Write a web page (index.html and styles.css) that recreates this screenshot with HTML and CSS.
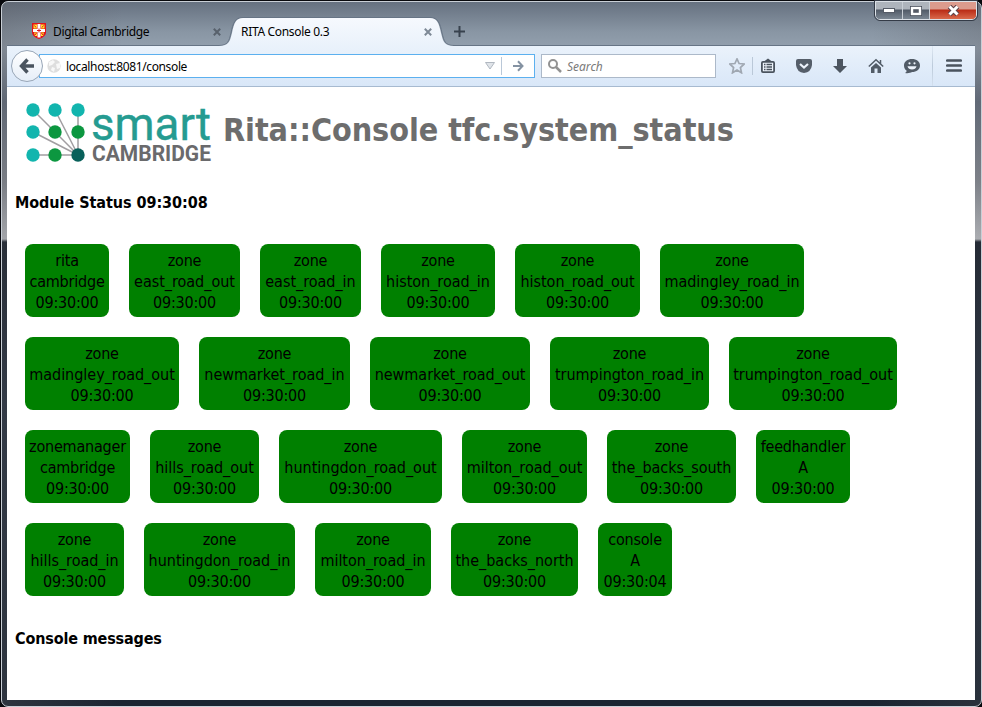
FILE: index.html
```html
<!DOCTYPE html>
<html lang="en"><head><meta charset="utf-8"><title>RITA Console 0.3</title><link rel="stylesheet" href="styles.css"></head>
<body>
<div class="window">
<div class="shell">
<header class="titlebar">
  <svg class="chrome-art" width="968" height="46" viewBox="7 0 968 46" aria-hidden="true">
    <defs><linearGradient id="tab" x1="0" y1="0" x2="0" y2="1"><stop offset="0" stop-color="#f6f9fe"/><stop offset="1" stop-color="#eaf2fb"/></linearGradient></defs>
    <path d="M7 45.500H219C228 45.500 229 41 231 33C233 23 235 17.500 243 17.500H430C438 17.500 440 23 442 33C444 41 445 45.500 454 45.500H975V47H7Z" fill="none" stroke="#667485"/>
    <path d="M219 46C229 46 230 41 232 33C234 23 236 18 243 18H430C437 18 439 23 441 33C443 41 444 46 454 46Z" fill="url(#tab)"/>
  </svg>
  <div class="tab tab-one">
    <svg class="shield" width="14" height="16" viewBox="0 0 14 16"><path d="M0 0H14V10Q13 14 7 16Q1 14 0 10Z" fill="#e2121b"/><path d="M1.500 1.500H5V5.500H1.500ZM9 1.500H12.500V5.500H9ZM2 9.500H5V13H3ZM9 9.500H12L11 13H9Z" fill="#ffe52c"/><path d="M2.500 2.500 4 4.500M11.500 2.500 10 4.500M3 12 4.500 10M11 12 9.500 10" stroke="#e2121b"/><path d="M7 1V14.500M1 7.500H13" stroke="#fff" stroke-width="3"/><path d="M7 5.500V9.500M5 7.500H9" stroke="#e2121b"/></svg>
    <span>Digital Cambridge</span>
    <svg class="x" width="8" height="8" viewBox="0 0 8 8"><path d="M.8.800 7.200 7.200M7.200.8.800 7.200" stroke="#58616c" stroke-width="2"/></svg>
  </div>
  <div class="tab tab-two"><span>RITA Console 0.3</span>
    <svg class="x" width="8" height="8" viewBox="0 0 8 8"><path d="M.8.800 7.200 7.200M7.200.8.800 7.200" stroke="#7e8996" stroke-width="2"/></svg>
  </div>
  <svg class="plus" width="11" height="11" viewBox="0 0 11 11"><path d="M5.500 0V11M0 5.500H11" stroke="#38424e" stroke-width="2"/></svg>
</header>
<nav class="toolbar">
  <div class="back"><svg width="16" height="16" viewBox="0 0 16 16"><path d="M8.500 1.500 2.500 8 8.500 14.500M3 8H15" fill="none" stroke="#4a545f" stroke-width="3.400"/></svg></div>
  <div class="url">
    <svg class="globe" width="14" height="14" viewBox="0 0 14 14"><circle cx="7" cy="7" r="6.700" fill="#dedede"/><path d="M2 3 6 1 8 3 5 6 2 7ZM9 5 13 4 13 9 10 10ZM5 8 8 9 7 13 4 11Z" fill="#f8f8f8"/></svg>
    <span class="address">localhost:8081/console</span>
    <svg class="drop" width="10" height="8" viewBox="0 0 10 8"><path d="M.5.500H9.500L5 7Z" fill="#e0e4e9" stroke="#b0b7c0"/></svg>
    <i class="rule"></i>
    <svg class="go" width="11" height="12" viewBox="0 0 11 12"><path d="M0 6H9M5 1.300 9.500 6 5 10.700" fill="none" stroke="#8492a2" stroke-width="2"/></svg>
  </div>
  <div class="search"><svg width="14" height="14" viewBox="0 0 14 14"><circle cx="5" cy="5" r="4" fill="none" stroke="#929292" stroke-width="2"/><path d="M8 8 13 13" stroke="#929292" stroke-width="2.500"/></svg><span>Search</span></div>
  <div class="tools">
    <svg width="16" height="16" viewBox="0 0 16 16"><path d="M8 .9 10.100 5.500 15.200 6 11.400 9.500 12.500 14.800 8 12 3.500 14.800 4.600 9.500.8 6 5.900 5.500Z" fill="none" stroke="#a0a8b2" stroke-width="1.700"/></svg>
    <i class="rule"></i>
    <svg width="16" height="16" viewBox="0 0 16 16"><path d="M4 3.500 8 .500 12 3.500Z" fill="#4a535e"/><rect x="1.900" y="3.900" width="12.200" height="10.200" rx="1" fill="#eef4fc" stroke="#4a535e" stroke-width="1.800"/><path d="M4 6.500H5.500M6.500 6.500H12M4 9H5.500M6.500 9H12M4 11.500H5.500M6.500 11.500H12" stroke="#4a535e" stroke-width="1.300"/></svg>
    <svg width="16" height="16" viewBox="0 0 16 16"><path d="M0 3Q0 1 2 1H14Q16 1 16 3V7Q15 14.500 8 15Q1 14.500 0 7Z" fill="#555e69"/><path d="M4 6 8 9.500 12 6" fill="none" stroke="#edf3fb" stroke-width="2.200"/></svg>
    <svg width="16" height="16" viewBox="0 0 16 16"><path d="M5 1H11V8H15L8 15 1 8H5Z" fill="#4c5560"/></svg>
    <svg width="16" height="16" viewBox="0 0 16 16"><path d="M.8 8.500 8 1.800 15.200 8.500M12.500 2V6" fill="none" stroke="#525c67" stroke-width="1.500"/><path d="M3 9.500 8 5 13 9.500V15H9.500V10.500H6.500V15H3Z" fill="#525c67"/></svg>
    <svg width="16" height="16" viewBox="0 0 16 16"><path d="M8 1C12.500 1 16 3.500 16 7.500S12.500 14 8 14C6.500 15 4 15.500 1 15Q3 14 2.500 12.500C1 11.500 0 10 0 7.500C0 3.500 3.500 1 8 1Z" fill="#525c67"/><circle cx="5.500" cy="5.300" r="1.100" fill="#edf3fb"/><circle cx="10.500" cy="5.300" r="1.100" fill="#edf3fb"/><path d="M3.500 8.300H12.500Q11.500 11.500 8 11.500T3.500 8.300Z" fill="#edf3fb"/></svg>
    <i class="rule tall"></i>
    <svg width="16" height="16" viewBox="0 0 16 16"><path d="M1.300 2.500H14.700M1.300 7.500H14.700M1.300 12.500H14.700" stroke="#4a535e" stroke-width="2.700" stroke-linecap="round"/></svg>
  </div>
</nav>
<main>
  <div class="brand">
    <svg class="logo" width="195" height="75" viewBox="17 95 195 75" role="img" aria-label="smart cambridge">
      <g stroke="#a19ea1" stroke-width="1.500" fill="none"><path d="M33 110 78 155M55 110 78 155M78 110V155H33M33 132 78 155M55 132 78 155"/></g>
      <g fill="#12b5ae"><circle cx="33" cy="110" r="6.700"/><circle cx="55" cy="110" r="6.700"/><circle cx="78" cy="110" r="6.700"/><circle cx="33" cy="132" r="6.700"/><circle cx="33" cy="155" r="6.700"/></g>
      <g fill="#0c9740"><circle cx="55" cy="132" r="6.700"/><circle cx="78" cy="132" r="6.700"/><circle cx="55" cy="155" r="6.700"/></g><circle cx="78" cy="155" r="6.700" fill="#08605a"/>
      <text class="smart" x="91" y="140" textLength="120" lengthAdjust="spacingAndGlyphs">smart</text>
      <text class="camb" x="92" y="161" textLength="119" lengthAdjust="spacingAndGlyphs">CAMBRIDGE</text>
    </svg>
    <h1>Rita::Console tfc.system_status</h1>
  </div>
  <h2 class="status">Module Status 09:30:08</h2>
  <section class="modules">
    <div class="row row-a"><div class="card">rita<br>cambridge<br>09:30:00</div><div class="card">zone<br><span>east_road_out</span><br>09:30:00</div><div class="card">zone<br><span>east_road_in</span><br>09:30:00</div><div class="card">zone<br><span>histon_road_in</span><br>09:30:00</div><div class="card">zone<br><span>histon_road_out</span><br>09:30:00</div><div class="card">zone<br><span>madingley_road_in</span><br>09:30:00</div></div>
    <div class="row row-b"><div class="card">zone<br><span>madingley_road_out</span><br>09:30:00</div><div class="card">zone<br><span>newmarket_road_in</span><br>09:30:00</div><div class="card">zone<br><span>newmarket_road_out</span><br>09:30:00</div><div class="card">zone<br><span>trumpington_road_in</span><br>09:30:00</div><div class="card">zone<br><span>trumpington_road_out</span><br>09:30:00</div></div>
    <div class="row row-c"><div class="card">zonemanager<br>cambridge<br>09:30:00</div><div class="card">zone<br><span>hills_road_out</span><br>09:30:00</div><div class="card">zone<br><span>huntingdon_road_out</span><br>09:30:00</div><div class="card">zone<br><span>milton_road_out</span><br>09:30:00</div><div class="card">zone<br><span>the_backs_south</span><br>09:30:00</div><div class="card">feedhandler<br>A<br>09:30:00</div></div>
    <div class="row row-d"><div class="card">zone<br><span>hills_road_in</span><br>09:30:00</div><div class="card">zone<br><span>huntingdon_road_in</span><br>09:30:00</div><div class="card">zone<br><span>milton_road_in</span><br>09:30:00</div><div class="card">zone<br><span>the_backs_north</span><br>09:30:00</div><div class="card">console<br>A<br>09:30:04</div></div>
  </section>
  <h2 class="messages">Console messages</h2>
</main>
</div>
<div class="controls"><b><svg width="12" height="5"><rect x=".5" y=".5" width="11" height="4" fill="#fff" stroke="#555b66"/></svg></b><b><svg width="12" height="10"><rect x="2" y="2" width="8" height="6" fill="none" stroke="#454b57" stroke-width="4"/><rect x="2" y="2" width="8" height="6" fill="#555b66" stroke="#fff" stroke-width="2.400"/></svg></b><b class="close"><svg width="13" height="11" viewBox="0 0 13 11"><path d="M2.500 1.500 10.500 9.500M10.500 1.500 2.500 9.500" stroke="#59424a" stroke-width="5"/><path d="M2.500 1.500 10.500 9.500M10.500 1.500 2.500 9.500" stroke="#fff" stroke-width="3"/></svg></b></div>
</div>
</body></html>
```
FILE: styles.css
```css
*{box-sizing:border-box}
body{margin:0;width:982px;height:707px;overflow:hidden;background:#08090d}
.window{position:relative;width:981px;height:706px;margin:1px 0 0 1px;padding:0 5px 5px;border:1px solid #c9cfd6;border-radius:7px;
 background:linear-gradient(90deg,#56565b55,transparent 120px 870px,#56565b44),linear-gradient(#667180,#8996a4 30px,#93a0ae 46px,#657080 100px,#8b9098 180px,#c8cbcf 237px,#141c28 240px,#222c3b 400px,#1a2431 700px)}
.shell{width:968px;height:698px;display:flex;flex-direction:column}
.titlebar{position:relative;height:44px;display:flex;font:12px "Noto Sans",sans-serif;color:#000}
.chrome-art{position:absolute;left:0;top:-2px}
.tab{position:relative;display:flex;align-items:center;height:24px;margin-top:17px}
.tab-one{width:189px;margin-left:25px}
.tab-one span{margin-left:7px;letter-spacing:-.35px}
.tab-two{width:191px;margin-left:20px}
.tab-two span{letter-spacing:-.32px}
.x{margin-left:auto}
.tab .x{margin-top:1px}
.plus{position:relative;margin:24px 0 0 22px}
.toolbar{height:41px;flex:none;display:flex;align-items:center;background:linear-gradient(#eaf2fb,#d9e7f8);border-bottom:1px solid #a7bad0;padding-left:4px;font:12px "Noto Sans",sans-serif}
.back{width:32px;height:32px;border:1px solid #98a6b7;border-radius:50%;background:linear-gradient(#fff,#e6eef8);display:grid;place-items:center;z-index:1}
.url{width:496px;height:24px;margin-left:-4px;border:1px solid #5cb0ef;background:#fff;display:flex;align-items:center;padding-left:7px}
.address{margin-left:5px;letter-spacing:-.37px}
.drop{margin-left:auto}
.rule{width:1px;height:18px;background:#bac8d8;flex:none}
.url .rule{margin-left:6px}
.go{margin:0 10px 0 11px}
.search{width:175px;height:24px;margin-left:6px;border:1px solid #acb9c9;background:#fff;display:flex;align-items:center;padding-left:6px;gap:5px;color:#7a7a7a;font-style:italic}
.tools{display:flex;align-items:center;margin-left:13px}
.tools .rule{margin:0 7px}
.tools svg+svg{margin-left:20px}
.tools .tall{height:40px;margin:0 13px 0 12px;background:linear-gradient(#dfe8f3,#bccada 50%,#d4e0ee)}
main{background:#fff;flex:1;padding-left:8px;color:#000;font-family:"DejaVu Sans Condensed","DejaVu Sans",sans-serif;font-stretch:condensed}
.brand{height:84px;padding-top:8px;display:flex;align-items:flex-start}
.logo{margin-left:2px;flex:none;overflow:visible}
.smart{font:400 46px Roboto,sans-serif;fill:#259b91;stroke:#259b91;stroke-width:.4px}
.camb{font:bold 22px Roboto,sans-serif;fill:#6a6a6c}
h1{margin:15px 0 0 11px;font-size:32px;line-height:40px;color:#6d6d6d;letter-spacing:-.06px;white-space:nowrap}
h2{margin:0;font-size:16px;line-height:22px}
.status{margin-top:21px;letter-spacing:-.05px}
.modules{padding:30px 0 0 10px;display:flex;flex-direction:column;gap:20px}
.row{display:grid;column-gap:20px}
.row-a{grid-template-columns:84px 111px 101px 114px 125px 144px}
.row-b{grid-template-columns:154px 151px 160px 159px 168px}
.row-c{grid-template-columns:105px 109px 163px 125px 129px 94px}
.row-d{grid-template-columns:99px 151px 116px 127px 74px}
.card{height:73px;border-radius:8px;background:#008000;padding-top:6px;text-align:center;font-size:16px;line-height:21px;letter-spacing:-.2px;white-space:nowrap}
.card span{letter-spacing:-.02px}
.messages{margin-top:32px;letter-spacing:-.15px}
.controls{position:absolute;right:4px;top:-1px;height:19px;display:flex;border:1px solid #dce1e7;border-radius:0 0 5px 5px;overflow:hidden;outline:1px solid #343b47}
.controls b{width:27px;display:grid;place-items:center;background:linear-gradient(#aeb4bc 0 40%,#525b68 48%,#7b8692);border-right:1px solid #c8ced5}
.controls .close{width:46px;border:0;background:linear-gradient(#dc9b8d 0 40%,#ba2c16 48%,#d9694b)}
```
